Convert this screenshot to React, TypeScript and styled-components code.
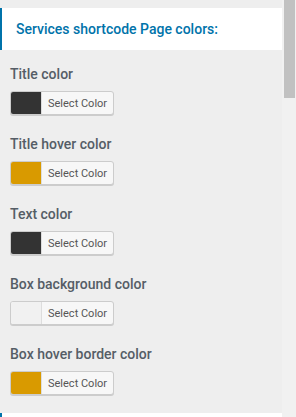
import React from "react";
import styled, { createGlobalStyle } from "styled-components";

const Global = createGlobalStyle`
  html, body { margin: 0; padding: 0; background: #eeeeee; overflow: hidden; }
  body { font-family: Roboto, "Noto Sans", "Liberation Sans", sans-serif; }
`;

const Frame = styled.div`
  display: flex;
  width: 296px;
  height: 417px;
  overflow: hidden;
  background: #eeeeee;
`;

const Panel = styled.div`
  width: 282px;
  flex: none;
  display: flex;
  flex-direction: column;
`;

const SectionTitle = styled.h3<{ $top: number }>`
  margin: ${(p) => p.$top}px 0 0 0;
  height: 42px;
  box-sizing: border-box;
  flex: none;
  background: #ffffff;
  border-left: 2px solid #0073aa;
  padding: 0 0 0 14px;
  display: flex;
  align-items: center;
  color: #0073aa;
  font-size: 14px;
  font-weight: 500;
  line-height: 1;
`;

const Fields = styled.div`
  display: flex;
  flex-direction: column;
  padding: 14px 0 0 10px;
`;

const Field = styled.div`
  display: flex;
  flex-direction: column;
  align-items: flex-start;
  margin-bottom: 19px;
  &:last-child { margin-bottom: 18px; }
`;

const Label = styled.span`
  display: block;
  font-size: 14px;
  line-height: 21px;
  font-weight: 500;
  color: #555d66;
  margin-bottom: 6px;
`;

const ColorButton = styled.button`
  display: flex;
  align-items: stretch;
  width: 104px;
  height: 24px;
  padding: 0;
  box-sizing: border-box;
  border: 1px solid #cccccc;
  border-radius: 3px;
  box-shadow: 0 1px 0 #cccccc;
  background: #f7f7f7;
  overflow: hidden;
  cursor: pointer;
  font-family: inherit;
`;

const Swatch = styled.span<{ $color: string }>`
  width: 30px;
  flex: none;
  background: ${(p) => p.$color};
  border-right: 1px solid #dddddd;
`;

const ButtonText = styled.span`
  display: flex;
  align-items: center;
  padding: 0 6px;
  font-size: 11px;
  color: #555555;
  white-space: nowrap;
`;

const ScrollTrack = styled.div`
  width: 14px;
  flex: none;
  background: #f1f1f1;
  padding: 0 1px 0 2px;
  box-sizing: border-box;
`;

const ScrollThumb = styled.div`
  height: 98px;
  background: #c1c1c1;
`;

const fields = [
  { label: "Title color", color: "#333333" },
  { label: "Title hover color", color: "#d99a00" },
  { label: "Text color", color: "#333333" },
  { label: "Box background color", color: "#f1f1f1" },
  { label: "Box hover border color", color: "#d99a00" },
];

export default function App() {
  return (
    <>
      <Global />
      <Frame>
        <Panel>
          <SectionTitle $top={8}>Services shortcode Page colors:</SectionTitle>
          <Fields>
            {fields.map((f) => (
              <Field key={f.label}>
                <Label>{f.label}</Label>
                <ColorButton type="button">
                  <Swatch $color={f.color} />
                  <ButtonText>Select Color</ButtonText>
                </ColorButton>
              </Field>
            ))}
          </Fields>
          <SectionTitle $top={0}>&nbsp;</SectionTitle>
        </Panel>
        <ScrollTrack>
          <ScrollThumb />
        </ScrollTrack>
      </Frame>
    </>
  );
}
